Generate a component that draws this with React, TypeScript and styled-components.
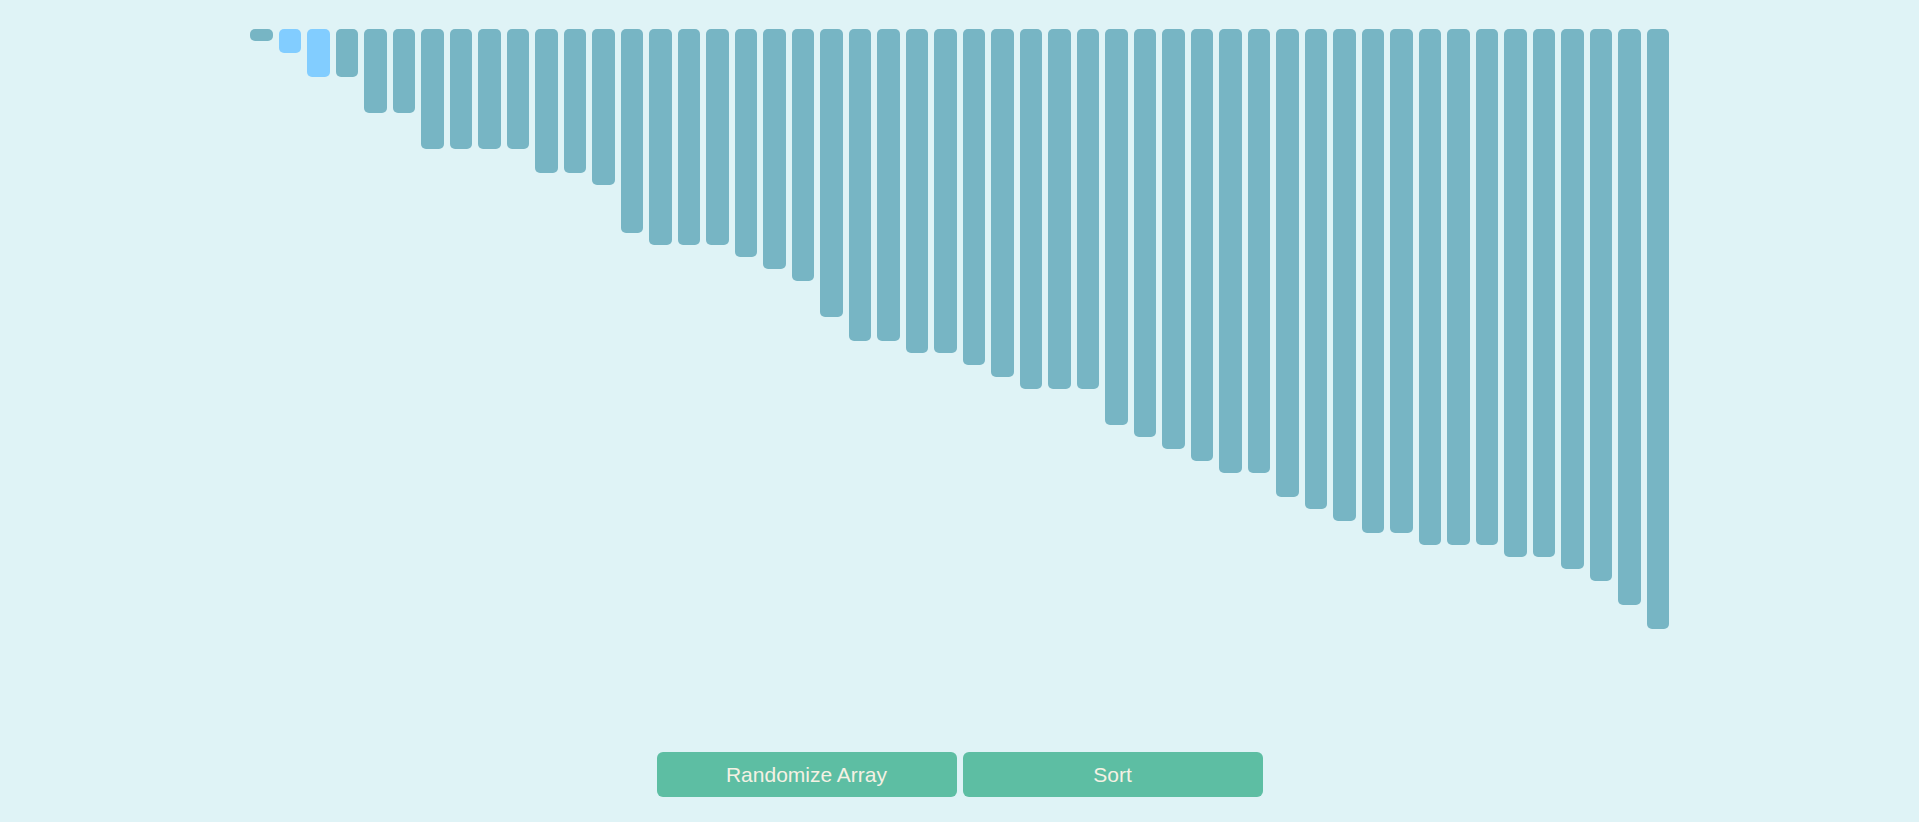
import React from "react";
import styled, { createGlobalStyle } from "styled-components";

const GlobalStyle = createGlobalStyle`
  html, body {
    margin: 0;
    padding: 0;
    background: #dff3f6;
  }
  body {
    font-family: "Liberation Sans", Arial, Helvetica, sans-serif;
  }
`;

const Page = styled.div`
  display: flex;
  flex-direction: column;
  align-items: center;
  min-height: 100vh;
  background: #dff3f6;
  padding-top: 29px;
  box-sizing: border-box;
`;

const BarsArea = styled.div`
  display: flex;
  align-items: flex-start;
  justify-content: center;
  gap: 6px;
  height: 723px;
`;

const Bar = styled.div<{ $active?: boolean }>`
  width: 22.5px;
  border-radius: 5px;
  background: ${(p) => (p.$active ? "#82cdff" : "#77b5c4")};
`;

const ButtonRow = styled.div`
  display: flex;
  gap: 6px;
`;

const Button = styled.button`
  width: 300px;
  height: 45px;
  border: none;
  border-radius: 6px;
  background: #5dbea3;
  color: #f5f1e4;
  font-family: "Liberation Sans", Arial, Helvetica, sans-serif;
  font-size: 21px;
  cursor: pointer;
  padding: 0;
`;

const values = [
  1, 2, 4, 4, 7, 7, 10, 10, 10, 10, 12, 12, 13, 17, 18, 18, 18, 19, 20, 21,
  24, 26, 26, 27, 27, 28, 29, 30, 30, 30, 33, 34, 35, 36, 37, 37, 39, 40, 41,
  42, 42, 43, 43, 43, 44, 44, 45, 46, 48, 50,
];

const active = new Set([1, 2]);

export default function App() {
  return (
    <>
      <GlobalStyle />
      <Page>
        <BarsArea>
          {values.map((v, i) => (
            <Bar key={i} $active={active.has(i)} style={{ height: v * 12 }} />
          ))}
        </BarsArea>
        <ButtonRow>
          <Button>Randomize Array</Button>
          <Button>Sort</Button>
        </ButtonRow>
      </Page>
    </>
  );
}
